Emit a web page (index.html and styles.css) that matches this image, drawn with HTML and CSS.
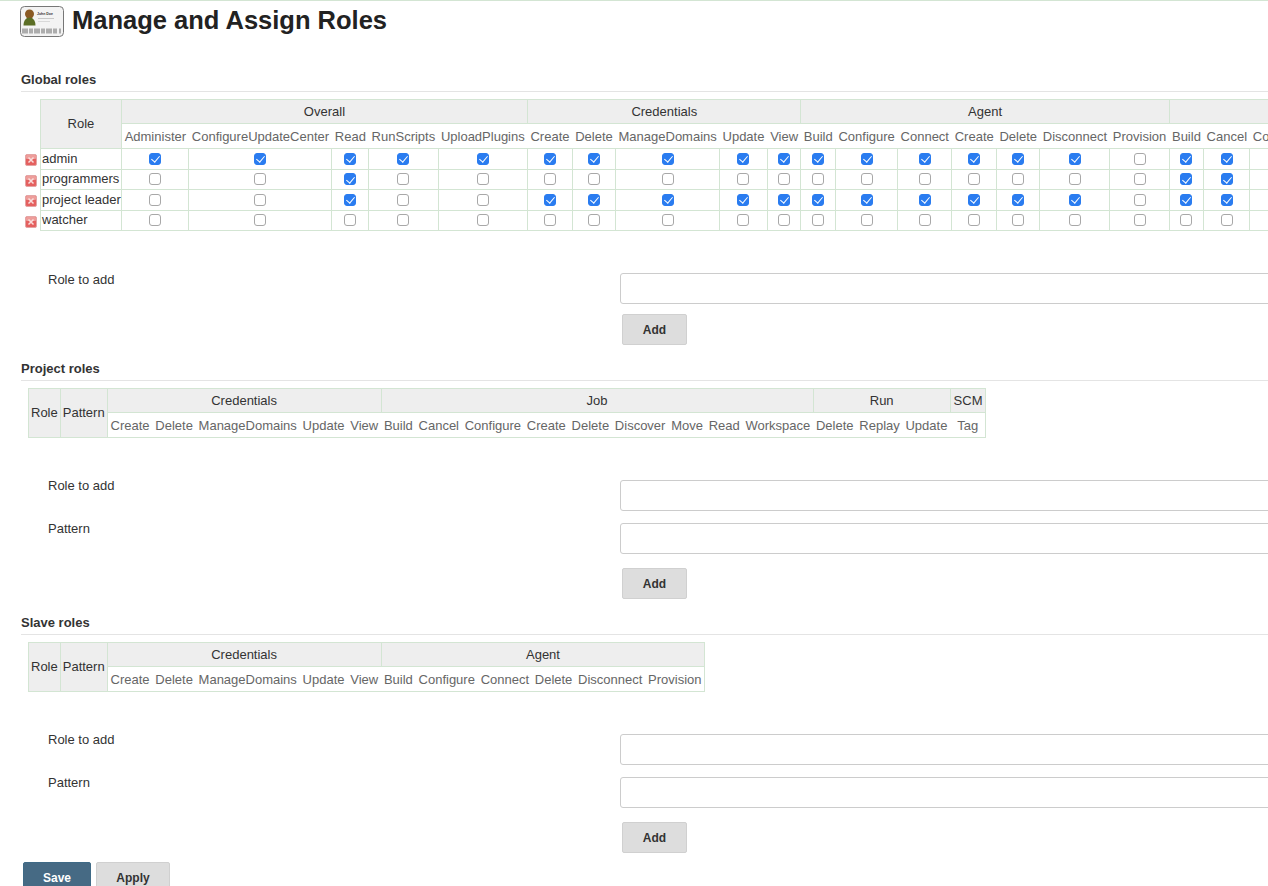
FILE: index.html
```html
<!DOCTYPE html>
<html lang="en">
<head>
  <meta charset="UTF-8" />
  <title>Manage and Assign Roles</title>
  <link rel="stylesheet" href="styles.css">
</head>
<body>
  <svg class="defs" width="0" height="0" aria-hidden="true">
    <symbol id="del" viewBox="0 0 12 12">
      <rect x="0.5" y="0.5" width="11" height="11" rx="1.5" fill="#e4605f" stroke="#e3a5a5"/>
      <rect x="1" y="1" width="10" height="4" rx="1" fill="#ee9d9a"/>
      <path d="M3.500 3.500l5 5M8.500 3.500l-5 5" stroke="#f9dedd" stroke-width="1.500"/>
    </symbol>
  </svg>

  <main class="page">
    <h1 class="title">
      <svg class="title-icon" viewBox="0 0 44 32" aria-hidden="true">
        <rect x="0.5" y="0.5" width="43" height="30" rx="4" fill="#f3f3f3" stroke="#777"/>
        <circle cx="9.500" cy="8" r="4.500" fill="#8a5a24"/>
        <path d="M3.500 19.500c0-5 2.500-8 6-8s6 3 6 8z" fill="#5b6e25"/>
        <text x="17" y="9" class="card-name">John Doe</text>
        <rect x="18" y="12" width="16" height="1" fill="#c8c8c8"/>
        <rect x="18" y="15" width="12" height="1" fill="#d8d8d8"/>
        <path d="M3 22.500v5M5 22.500v5M7 22.500v5M10 22.500v5M12 22.500v5M15 22.500v5M17 22.500v5M19 22.500v5M22 22.500v5M24 22.500v5M27 22.500v5M29 22.500v5M31 22.500v5M34 22.500v5M36 22.500v5M40 22.500v5" stroke="#666" stroke-width="1"/>
      </svg>
      Manage and Assign Roles
    </h1>

    <section class="global">
      <h2 class="section-head">Global roles</h2>
      <div class="global-table">
        <div class="del-col">
          <svg class="del"><use href="#del"/></svg>
          <svg class="del"><use href="#del"/></svg>
          <svg class="del"><use href="#del"/></svg>
          <svg class="del"><use href="#del"/></svg>
        </div>
        <table class="roles">
          <thead>
            <tr>
              <th rowspan="2" class="role-head role-wide">Role</th>
              <th colspan="5">Overall</th>
              <th colspan="5">Credentials</th>
              <th colspan="7">Agent</th>
              <th colspan="9">Job</th>
              <th colspan="3">Run</th>
              <th>SCM</th>
            </tr>
            <tr class="perms">
              <td>Administer</td><td>ConfigureUpdateCenter</td><td>Read</td><td>RunScripts</td><td>UploadPlugins</td>
              <td>Create</td><td>Delete</td><td>ManageDomains</td><td>Update</td><td>View</td>
              <td>Build</td><td>Configure</td><td>Connect</td><td>Create</td><td>Delete</td><td>Disconnect</td><td>Provision</td>
              <td>Build</td><td>Cancel</td><td>Configure</td><td>Create</td><td>Delete</td><td>Discover</td><td>Move</td><td>Read</td><td>Workspace</td>
              <td>Delete</td><td>Replay</td><td>Update</td>
              <td>Tag</td>
            </tr>
          </thead>
          <tbody>
            <tr>
              <td class="role-name">admin</td>
              <td><input type="checkbox" checked></td><td><input type="checkbox" checked></td><td><input type="checkbox" checked></td><td><input type="checkbox" checked></td><td><input type="checkbox" checked></td>
              <td><input type="checkbox" checked></td><td><input type="checkbox" checked></td><td><input type="checkbox" checked></td><td><input type="checkbox" checked></td><td><input type="checkbox" checked></td>
              <td><input type="checkbox" checked></td><td><input type="checkbox" checked></td><td><input type="checkbox" checked></td><td><input type="checkbox" checked></td><td><input type="checkbox" checked></td><td><input type="checkbox" checked></td><td><input type="checkbox"></td>
              <td><input type="checkbox" checked></td><td><input type="checkbox" checked></td><td></td><td></td><td></td><td></td><td></td><td></td><td></td>
              <td></td><td></td><td></td><td></td>
            </tr>
            <tr>
              <td class="role-name">programmers</td>
              <td><input type="checkbox"></td><td><input type="checkbox"></td><td><input type="checkbox" checked></td><td><input type="checkbox"></td><td><input type="checkbox"></td>
              <td><input type="checkbox"></td><td><input type="checkbox"></td><td><input type="checkbox"></td><td><input type="checkbox"></td><td><input type="checkbox"></td>
              <td><input type="checkbox"></td><td><input type="checkbox"></td><td><input type="checkbox"></td><td><input type="checkbox"></td><td><input type="checkbox"></td><td><input type="checkbox"></td><td><input type="checkbox"></td>
              <td><input type="checkbox" checked></td><td><input type="checkbox" checked></td><td></td><td></td><td></td><td></td><td></td><td></td><td></td>
              <td></td><td></td><td></td><td></td>
            </tr>
            <tr>
              <td class="role-name">project leader</td>
              <td><input type="checkbox"></td><td><input type="checkbox"></td><td><input type="checkbox" checked></td><td><input type="checkbox"></td><td><input type="checkbox"></td>
              <td><input type="checkbox" checked></td><td><input type="checkbox" checked></td><td><input type="checkbox" checked></td><td><input type="checkbox" checked></td><td><input type="checkbox" checked></td>
              <td><input type="checkbox" checked></td><td><input type="checkbox" checked></td><td><input type="checkbox" checked></td><td><input type="checkbox" checked></td><td><input type="checkbox" checked></td><td><input type="checkbox" checked></td><td><input type="checkbox"></td>
              <td><input type="checkbox" checked></td><td><input type="checkbox" checked></td><td></td><td></td><td></td><td></td><td></td><td></td><td></td>
              <td></td><td></td><td></td><td></td>
            </tr>
            <tr>
              <td class="role-name">watcher</td>
              <td><input type="checkbox"></td><td><input type="checkbox"></td><td><input type="checkbox"></td><td><input type="checkbox"></td><td><input type="checkbox"></td>
              <td><input type="checkbox"></td><td><input type="checkbox"></td><td><input type="checkbox"></td><td><input type="checkbox"></td><td><input type="checkbox"></td>
              <td><input type="checkbox"></td><td><input type="checkbox"></td><td><input type="checkbox"></td><td><input type="checkbox"></td><td><input type="checkbox"></td><td><input type="checkbox"></td><td><input type="checkbox"></td>
              <td><input type="checkbox"></td><td><input type="checkbox"></td><td></td><td></td><td></td><td></td><td></td><td></td><td></td>
              <td></td><td></td><td></td><td></td>
            </tr>
          </tbody>
        </table>
      </div>
      <div class="add-form single">
        <label class="field-label">Role to add</label>
        <input class="field-input" type="text">
        <button class="btn add-btn">Add</button>
      </div>
    </section>

    <section class="project">
      <h2 class="section-head">Project roles</h2>
      <table class="roles inset">
        <thead>
          <tr>
            <th rowspan="2" class="role-head">Role</th>
            <th rowspan="2" class="role-head">Pattern</th>
            <th colspan="5">Credentials</th>
            <th colspan="9">Job</th>
            <th colspan="3">Run</th>
            <th>SCM</th>
          </tr>
          <tr class="perms">
            <td>Create</td><td>Delete</td><td>ManageDomains</td><td>Update</td><td>View</td>
            <td>Build</td><td>Cancel</td><td>Configure</td><td>Create</td><td>Delete</td><td>Discover</td><td>Move</td><td>Read</td><td>Workspace</td>
            <td>Delete</td><td>Replay</td><td>Update</td>
            <td>Tag</td>
          </tr>
        </thead>
      </table>
      <div class="add-form">
        <label class="field-label">Role to add</label>
        <input class="field-input" type="text">
        <label class="field-label">Pattern</label>
        <input class="field-input" type="text">
        <button class="btn add-btn">Add</button>
      </div>
    </section>

    <section class="slave">
      <h2 class="section-head">Slave roles</h2>
      <table class="roles inset">
        <thead>
          <tr>
            <th rowspan="2" class="role-head">Role</th>
            <th rowspan="2" class="role-head">Pattern</th>
            <th colspan="5">Credentials</th>
            <th colspan="6">Agent</th>
          </tr>
          <tr class="perms">
            <td>Create</td><td>Delete</td><td>ManageDomains</td><td>Update</td><td>View</td>
            <td>Build</td><td>Configure</td><td>Connect</td><td>Delete</td><td>Disconnect</td><td>Provision</td>
          </tr>
        </thead>
      </table>
      <div class="add-form last-form">
        <label class="field-label">Role to add</label>
        <input class="field-input" type="text">
        <label class="field-label">Pattern</label>
        <input class="field-input" type="text">
        <button class="btn add-btn">Add</button>
      </div>
    </section>

    <div class="actions">
      <button class="btn btn-primary">Save</button>
      <button class="btn btn-apply">Apply</button>
    </div>
  </main>
</body>
</html>
```

FILE: styles.css
```css
* {
  box-sizing: border-box;
}
html, body {
  height: 100vh;
  overflow: hidden;
}
body {
  margin: 0;
  background-color: #fff;
  color: #333;
  font-family: "Liberation Sans", Arial, sans-serif;
  font-size: 13px;
  border-top: 1px solid #d3e5d3;
}
.defs {
  display: block;
  height: 0;
}
.page {
  width: 1400px;
  padding: 5px 0 0 20px;
}
.title {
  display: flex;
  align-items: flex-start;
  gap: 8px;
  margin: 0 0 34px;
  height: 32px;
  font-size: 25.500px;
  line-height: 28px;
  color: #222;
}
.title-icon {
  width: 44px;
  height: 32px;
  flex: none;
}
.card-name {
  font-size: 3.500px;
  font-weight: bold;
  fill: #333;
}
.section-head {
  margin: 0 0 7px 1px;
  padding-bottom: 3px;
  border-bottom: 1px solid #e4e4e4;
  font-size: 13px;
  line-height: 16px;
  font-weight: bold;
  color: #333;
}
.global-table {
  display: flex;
}
.del-col {
  display: flex;
  flex-direction: column;
  width: 20px;
  padding: 50px 0 0 5px;
  flex: none;
}
.del {
  display: block;
  width: 12px;
  height: 12px;
  margin: 5px 0 3.500px;
}
.roles {
  border-collapse: collapse;
  font-size: 13px;
  white-space: nowrap;
}
.roles.inset {
  margin-left: 8px;
}
.roles th, .roles td {
  border: 1px solid #d3e5d3;
  padding: 0 2.870px;
  text-align: center;
}
.roles th {
  height: 24px;
  background-color: #eee;
  font-weight: normal;
  color: #333;
}
.roles .role-head {
  padding: 0 2px 2px;
}
.role-wide {
  min-width: 80px;
}
.roles .perms td {
  height: 25px;
  color: #666;
  border-left: none;
  border-right: none;
}
.roles .perms td:last-child {
  border-right: 1px solid #d3e5d3;
}
.roles tbody td {
  height: 20.500px;
  line-height: 14px;
}
.roles .role-name {
  text-align: left;
  padding: 0 0 0 1px;
  color: #333;
}
.roles input {
  appearance: none;
  display: block;
  position: relative;
  width: 12px;
  height: 12px;
  margin: 0 auto;
  border: 1px solid #a8a8a8;
  border-radius: 3px;
  background-color: #fff;
}
.roles input:checked {
  border-color: #2a7cf0;
  background-color: #2a7cf0;
}
.roles input:checked::after {
  content: "";
  position: absolute;
  left: 3px;
  top: 0.500px;
  width: 4px;
  height: 7px;
  border: solid #fff;
  border-width: 0 1.500px 1.500px 0;
  transform: rotate(40deg);
}
.add-form {
  display: grid;
  grid-template-columns: 572px 700px;
  row-gap: 12px;
  margin: 42px 0 16px 28px;
}
.inset + .add-form .field-label {
  margin-top: -1px;
}
.field-label {
  line-height: 13px;
}
.field-input {
  height: 31px;
  border: 1px solid #ccc;
  border-radius: 3px;
  background-color: #fff;
}
.btn {
  height: 31px;
  padding: 0 13px;
  border: 1px solid #d0d0d0;
  border-radius: 2px;
  background-color: #ddd;
  color: #333;
  font-family: inherit;
  font-size: 12px;
  font-weight: bold;
}
.add-btn {
  grid-column: 2;
  justify-self: start;
  width: 65px;
  margin-left: 2px;
  margin-top: 2px;
}
.single .add-btn {
  margin-top: -2px;
}
.last-form {
  margin-bottom: 9px;
}
.actions {
  display: flex;
  gap: 5px;
  margin-left: 3px;
}
.btn-primary {
  width: 68px;
  background-color: #466a84;
  border-color: #3f6a86;
  color: #fff;
}
.btn-apply {
  width: 74px;
}
```
